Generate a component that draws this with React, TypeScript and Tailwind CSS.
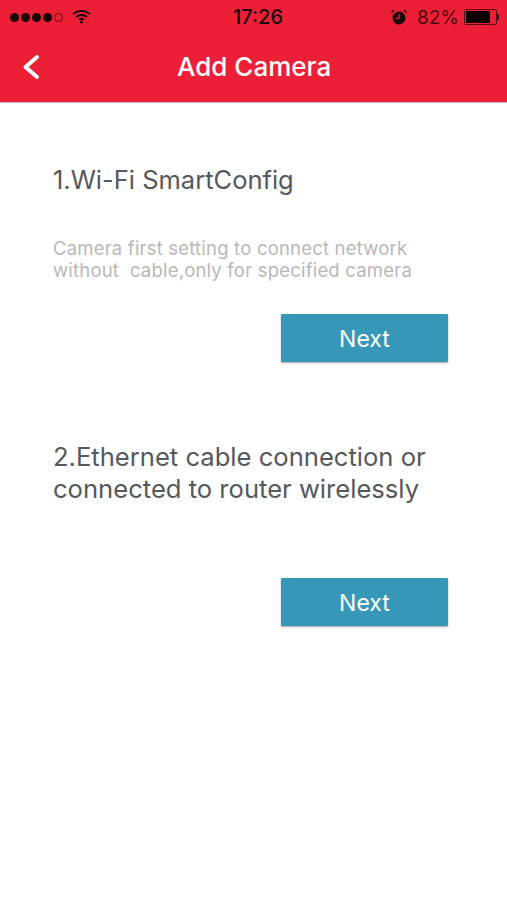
import { useState } from 'react'

function StatusBar() {
  return (
    <div className="flex h-[34px] items-center text-[#1a0508]">
      <div className="flex w-[218px] items-center pl-[10px]">
        <div className="flex gap-[2px]">
          <span className="h-[9px] w-[9px] rounded-full bg-[#1a0508]" />
          <span className="h-[9px] w-[9px] rounded-full bg-[#1a0508]" />
          <span className="h-[9px] w-[9px] rounded-full bg-[#1a0508]" />
          <span className="h-[9px] w-[9px] rounded-full bg-[#1a0508]" />
          <span className="h-[9px] w-[9px] rounded-full border border-[#5a0d18]" />
        </div>
        <svg className="ml-[9px] mt-[-1px]" width="19" height="15" viewBox="0 0 20 16" fill="none" stroke="#1a0508" strokeWidth="2">
          <path d="M1 5.5C6 .8 14 .8 19 5.5" />
          <path d="M4.2 8.6c3.3-2.9 8.3-2.9 11.6 0" />
          <path d="M7.3 11.4c1.6-1.2 3.8-1.2 5.4 0" />
          <circle cx="10" cy="14" r="1.5" fill="#1a0508" stroke="none" />
        </svg>
      </div>
      <div className="w-[80px] text-center text-[20px] font-medium leading-none">17:26</div>
      <div className="ml-auto flex items-center pr-[8px]">
        <svg width="18" height="18" viewBox="0 0 18 18">
          <circle cx="9" cy="10" r="6.5" fill="#1a0508" />
          <path d="M9 6v4.4H5.8" fill="none" stroke="#ed1f36" strokeWidth="1.3" />
          <path d="M1.5 4.5 4 2M16.5 4.5 14 2" fill="none" stroke="#1a0508" strokeWidth="1.5" />
        </svg>
        <span className="ml-[9px] text-[19px] leading-none text-[#4a0a14]">82%</span>
        <div className="ml-[5px] flex h-[16px] w-[33px] items-center rounded-[2px] border border-[#5a0d18] p-[1px]">
          <div className="h-full w-[82%] bg-[#0d0204]" />
        </div>
        <span className="h-[6px] w-[2px] rounded-r-sm bg-[#3a0810]" />
      </div>
    </div>
  )
}

function Header() {
  return (
    <header className="h-[102px] bg-[#ed1f36] shadow-[0_1px_1px_rgba(0,0,0,0.25)]">
      <StatusBar />
      <div className="flex h-[66px] items-center pl-[21px]">
        <svg width="20" height="26" viewBox="0 0 20 26" fill="none" stroke="white" strokeWidth="4" strokeLinecap="round" strokeLinejoin="round">
          <path d="M16 3 4.5 13 16 23" />
        </svg>
        <h1 className="ml-[136px] text-[26px] font-medium leading-none text-white">Add Camera</h1>
      </div>
    </header>
  )
}

function NextButton({ onClick }: { onClick?: () => void }) {
  return (
    <div className="flex justify-end pr-[59px]">
      <button
        onClick={onClick}
        className="h-[48px] w-[167px] rounded-[1px] bg-[#3797b8] pt-[3px] text-[23px] text-white shadow-[0_1px_2px_rgba(0,0,0,0.35)]"
      >
        Next
      </button>
    </div>
  )
}

export default function App() {
  const [, setStep] = useState(0)

  return (
    <div className="h-[900px] bg-white font-['Inter','Liberation_Sans',sans-serif]">
      <Header />
      <main>
        <h2 className="pl-[53px] pt-[62px] text-[25.5px] leading-[32px] text-[#55585c]">1.Wi-Fi SmartConfig</h2>
        <p className="whitespace-pre pl-[53px] pt-[41px] text-[18.5px] leading-[22px] tracking-[0.2px] text-[#b8b8b8]">
          {'Camera first setting to connect network\nwithout  cable,only for specified camera'}
        </p>
        <div className="pt-[33px]">
          <NextButton onClick={() => setStep(1)} />
        </div>
        <h2 className="whitespace-pre pl-[53px] pt-[79px] text-[25.6px] leading-[32px] text-[#55585c]">
          {'2.Ethernet cable connection or\nconnected to router wirelessly'}
        </h2>
        <div className="pt-[73px]">
          <NextButton onClick={() => setStep(2)} />
        </div>
      </main>
    </div>
  )
}
